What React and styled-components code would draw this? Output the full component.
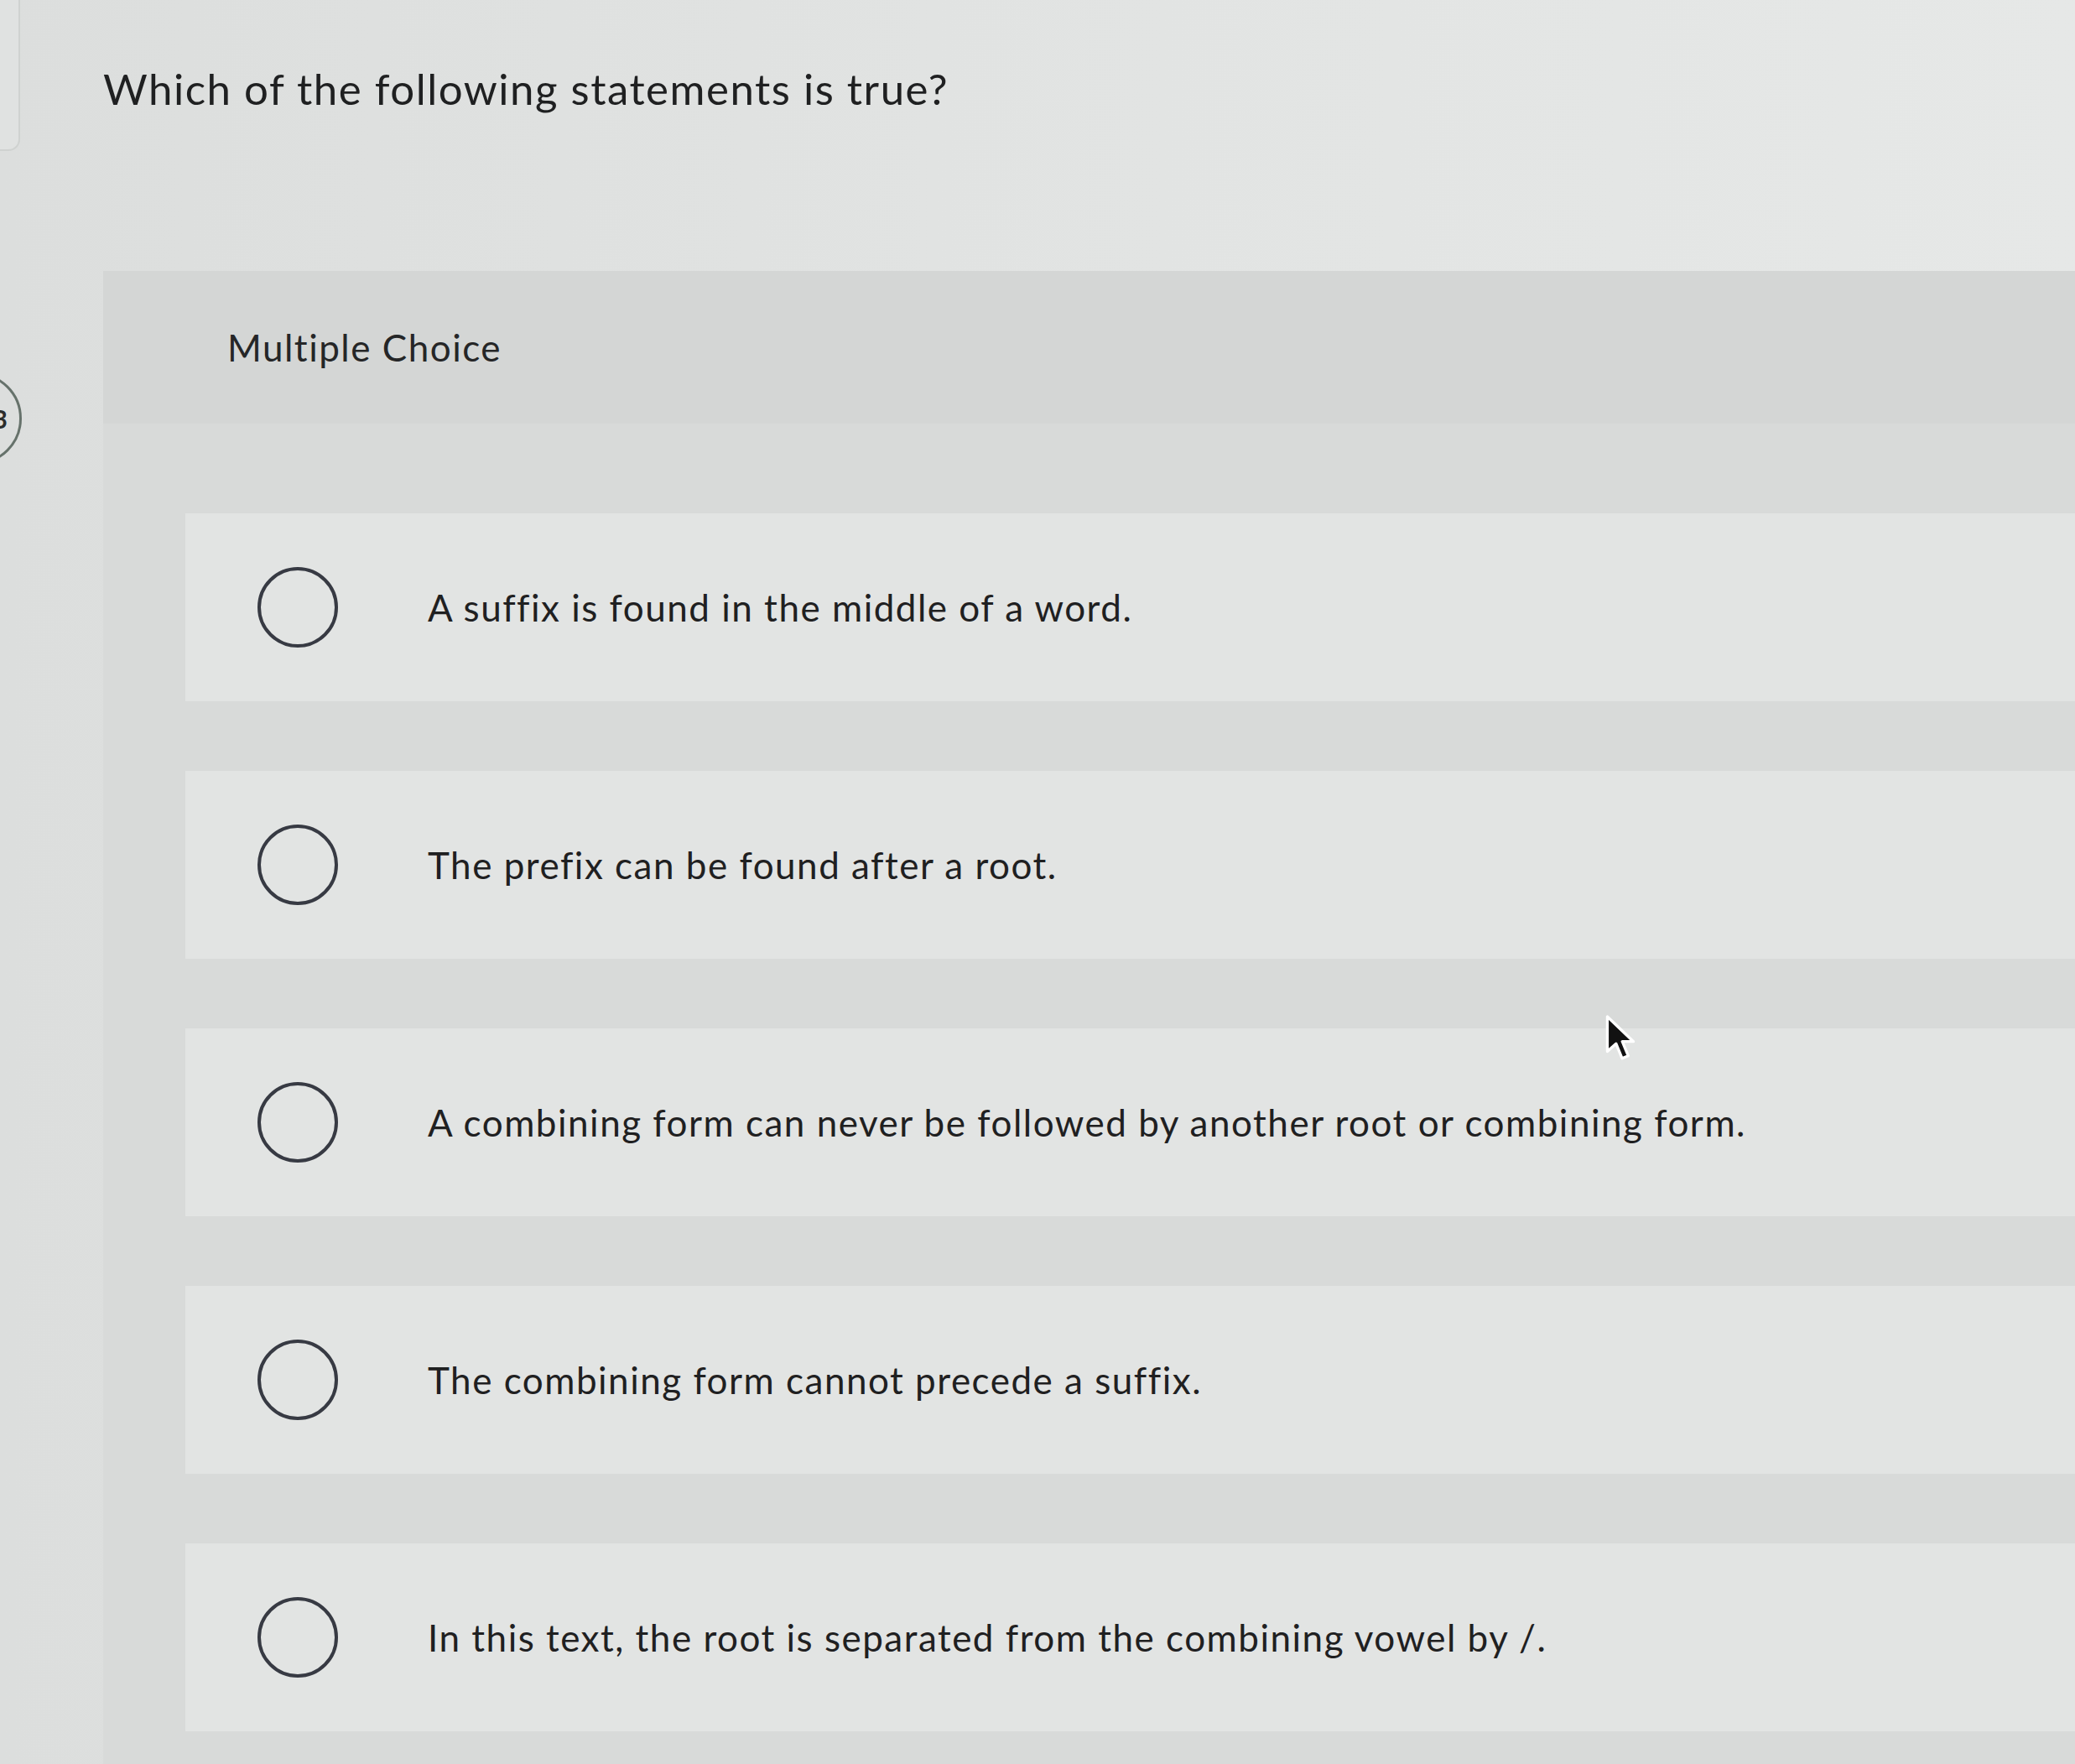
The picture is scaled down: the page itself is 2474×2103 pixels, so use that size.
import React from 'react';
import styled, { createGlobalStyle } from 'styled-components';

const GlobalStyle = createGlobalStyle`
    html, body {
        margin: 0;
        padding: 0;
    }
    body {
        background-color: #dfe1e0;
        font-family: Lato, "Open Sans", "Liberation Sans", sans-serif;
        color: #202122;
    }
`;

const Page = styled.div`
    position: relative;
    width: 2474px;
    min-height: 2103px;
    box-sizing: border-box;
    padding: 76px 0 0 123px;
    overflow: hidden;
    background: linear-gradient(90deg, #dcdedd 0%, #e1e3e2 45%, #e6e8e7 100%);
`;

// edge of the sidebar card, mostly off screen
const SideCard = styled.div`
    position: absolute;
    left: -200px;
    top: -20px;
    width: 220px;
    height: 196px;
    border: 2px solid #cfd2d0;
    border-radius: 14px;
    background-color: #e0e2e1;
`;

const SideButton = styled.div`
    position: absolute;
    left: -84px;
    top: 444px;
    width: 110px;
    height: 110px;
    box-sizing: border-box;
    border: 3px solid #66726b;
    border-radius: 50%;
    display: flex;
    align-items: center;
    justify-content: flex-end;
    padding-right: 14px;
    font-size: 30px;
    font-weight: 700;
    color: #2b2d2c;
`;

const Question = styled.h1`
    margin: 0;
    font-size: 51px;
    line-height: 60px;
    font-weight: 400;
    letter-spacing: 1.5px;
    color: #1f2021;
`;

const Panel = styled.section`
    margin-top: 187px;
    background-color: #d8dad9;
    padding-bottom: 40px;
`;

const PanelHeader = styled.div`
    height: 182px;
    display: flex;
    align-items: center;
    padding-left: 148px;
    background-color: #d4d6d5;
    font-size: 44px;
    letter-spacing: 1.5px;
    color: #252627;
`;

const OptionList = styled.div`
    display: flex;
    flex-direction: column;
    gap: 83px;
    padding: 107px 0 0 98px;
`;

const OptionRow = styled.label`
    height: 224px;
    display: flex;
    align-items: center;
    padding-left: 86px;
    background-color: #e2e4e3;
    cursor: pointer;
`;

const Radio = styled.span`
    width: 96px;
    height: 96px;
    box-sizing: border-box;
    flex-shrink: 0;
    border: 4px solid #373a43;
    border-radius: 50%;
`;

const OptionText = styled.span`
    margin-left: 107px;
    font-size: 44px;
    letter-spacing: 1.5px;
    color: #1f2021;
`;

const Cursor = styled.svg`
    position: absolute;
    left: 1912px;
    top: 1210px;
    width: 42px;
    height: 58px;
`;

const options = [
    'A suffix is found in the middle of a word.',
    'The prefix can be found after a root.',
    'A combining form can never be followed by another root or combining form.',
    'The combining form cannot precede a suffix.',
    'In this text, the root is separated from the combining vowel by /.',
];

const App = () => {
    return (
        <Page>
            <GlobalStyle />
            <SideCard />
            <SideButton>3</SideButton>
            <Question>Which of the following statements is true?</Question>
            <Panel>
                <PanelHeader>Multiple Choice</PanelHeader>
                <OptionList>
                    {options.map((text) => (
                        <OptionRow key={text}>
                            <Radio />
                            <OptionText>{text}</OptionText>
                        </OptionRow>
                    ))}
                </OptionList>
            </Panel>
            <Cursor viewBox="0 0 20 28">
                <path
                    d="M2 1 L2 21 L7 16.5 L10.5 25 L14 23.5 L10.6 15.3 L17 15.3 Z"
                    fill="#111"
                    stroke="#fff"
                    strokeWidth="1.6"
                    strokeLinejoin="round"
                />
            </Cursor>
        </Page>
    );
};

export default App;
